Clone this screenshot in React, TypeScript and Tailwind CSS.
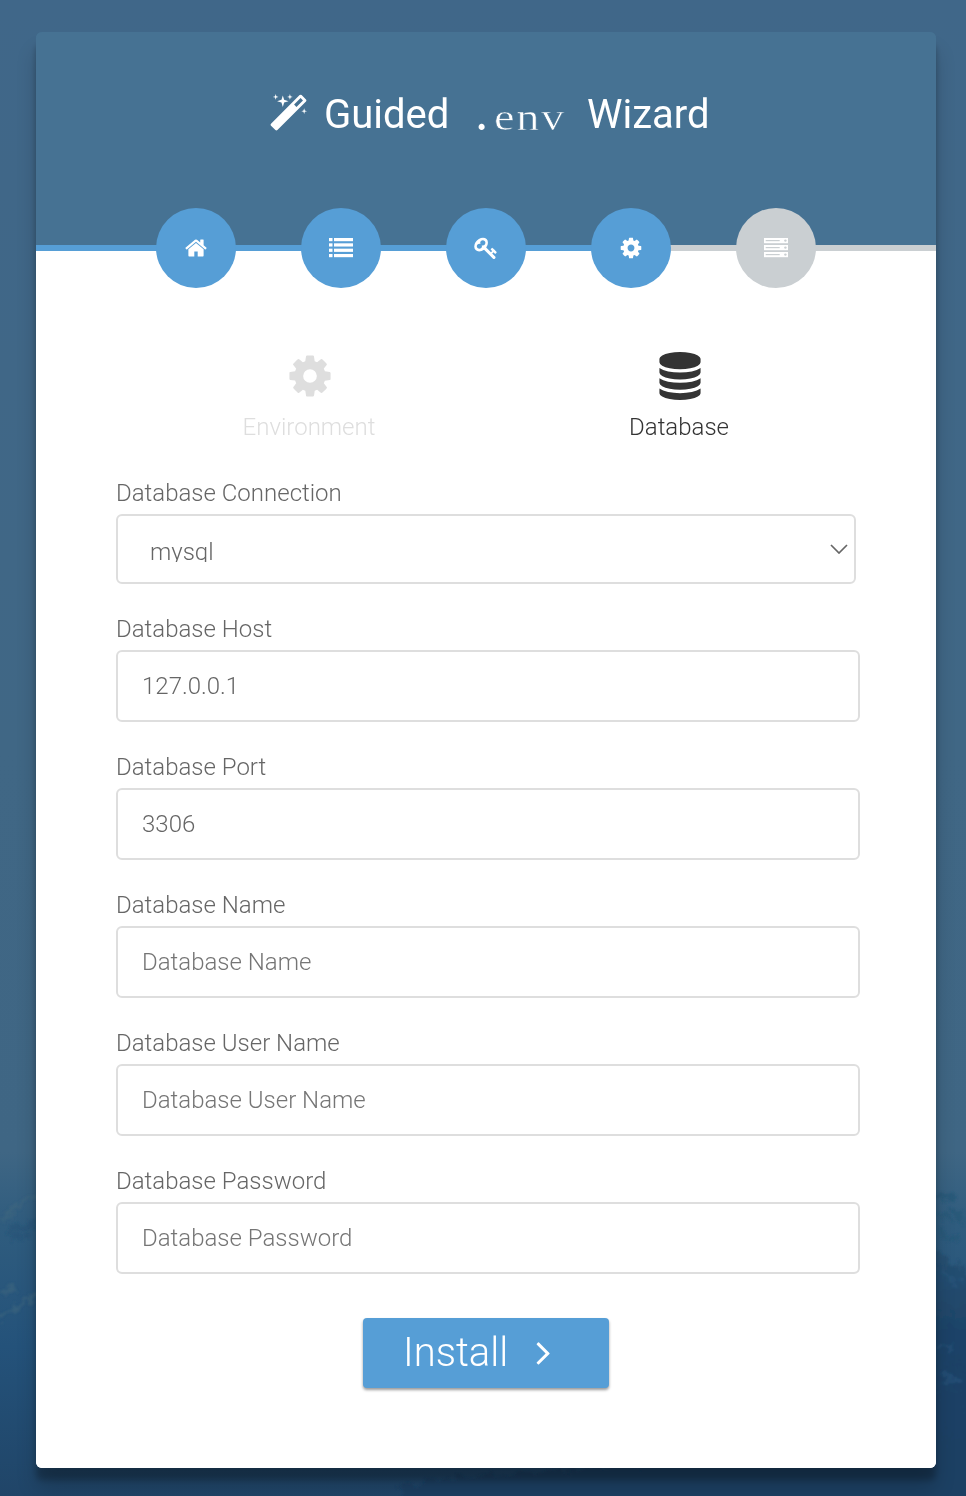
import type { ReactNode } from "react";

const paths = {
  magic:
    "M1190 581l293-293-107-107-293 293zm447-293q0 27-18 45l-1286 1286q-18 18-45 18t-45-18l-198-198q-18-18-18-45t18-45l1286-1286q18-18 45-18t45 18l198 198q18 18 18 45zm-1351-190l98 30-98 30-30 98-30-98-98-30 98-30 30-98zm350 162l196 60-196 60-60 196-60-196-196-60 196-60 60-196zm930 478l98 30-98 30-30 98-30-98-98-30 98-30 30-98zm-640-640l98 30-98 30-30 98-30-98-98-30 98-30 30-98z",
  home: "M1408 992v480q0 26-19 45t-45 19h-384v-384h-256v384h-384q-26 0-45-19t-19-45v-480q0-1 .5-3t.5-3l575-474 575 474q1 2 1 6zm223-69l-62 74q-8 9-21 11h-3q-13 0-21-7l-692-577-692 577q-12 8-24 7-13-2-21-11l-62-74q-8-10-7-23.5t11-21.5l719-599q32-26 76-26t76 26l244 204v-195q0-14 9-23t23-9h192q14 0 23 9t9 23v408l219 182q10 8 11 21.5t-7 23.5z",
  key: "M832 512q0-80-56-136t-136-56-136 56-56 136q0 42 19 83-41-19-83-19-80 0-136 56t-56 136 56 136 136 56 136-56 56-136q0-42-19-83 41 19 83 19 80 0 136-56t56-136zm851 704q0 17-49 66t-66 49q-9 0-28.5-16t-36.5-33-38.5-40-24.5-26l-96 96 220 220q28 28 28 68 0 42-39 81t-81 39q-40 0-68-28l-671-671q-176 131-365 131-163 0-265.5-102.5t-102.5-265.5q0-160 95-313t248-248 313-95q163 0 265.5 102.5t102.5 265.5q0 189-131 365l355 355 96-96q-3-3-26-24.5t-40-38.5-33-36.5-16-28.5q0-17 49-66t66-49q13 0 23 10 6 6 46 44.5t82 79.5 86.5 86 73 78 28.5 41z",
  cog: "M1024 896q0-106-75-181t-181-75-181 75-75 181 75 181 181 75 181-75 75-181zm512-109v222q0 12-8 23t-20 13l-185 28q-19 54-39 91 35 50 107 138 10 12 10 25t-9 23q-27 37-99 108t-94 71q-12 0-26-9l-138-108q-44 23-91 38-16 136-29 186-7 28-36 28h-222q-14 0-24.5-8.5t-11.5-21.5l-28-184q-49-16-90-37l-141 107q-10 9-25 9-14 0-25-11-126-114-165-168-7-10-7-23 0-12 8-23 15-21 51-66.5t54-70.5q-27-50-41-99l-183-27q-13-2-21-12.5t-8-23.5v-222q0-12 8-23t19-13l186-28q14-46 39-92-40-57-107-138-10-12-10-24 0-10 9-23 26-36 98.5-107.5t94.5-71.5q13 0 26 10l138 107q44-23 91-38 16-136 29-186 7-28 36-28h222q14 0 24.5 8.5t11.5 21.5l28 184q49 16 90 37l142-107q9-9 24-9 13 0 25 10 129 119 165 170 7 8 7 22 0 12-8 23-15 21-51 66.5t-54 70.5q26 50 41 98l183 28q13 2 21 12.5t8 23.5z",
  database:
    "M768 768q237 0 443-43t325-127v170q0 69-103 128t-280 93.5-385 34.5-385-34.5-280-93.5-103-128v-170q119 84 325 127t443 43zm0 768q237 0 443-43t325-127v170q0 69-103 128t-280 93.5-385 34.5-385-34.5-280-93.5-103-128v-170q119 84 325 127t443 43zm0-384q237 0 443-43t325-127v170q0 69-103 128t-280 93.5-385 34.5-385-34.5-280-93.5-103-128v-170q119 84 325 127t443 43zm0-1152q208 0 385 34.5t280 93.5 103 128v128q0 69-103 128t-280 93.5-385 34.5-385-34.5-280-93.5-103-128v-128q0-69 103-128t280-93.5 385-34.5z",
  angleRight:
    "M595 960q0 13-10 23l-466 466q-10 10-23 10t-23-10l-50-50q-10-10-10-23t10-23l393-393-393-393q-10-10-10-23t10-23l50-50q10-10 23-10t23 10l466 466q10 10 10 23z",
};

function Glyph({ d, box, className }: { d: string; box: string; className: string }) {
  return (
    <svg viewBox={box} className={className} fill="currentColor" aria-hidden="true">
      <path d={d} />
    </svg>
  );
}

function ListIcon() {
  return (
    <svg viewBox="0 0 24 20" className="h-5 w-6" fill="currentColor" aria-hidden="true">
      {[0, 5.33, 10.67, 16].map((y) => (
        <g key={y}>
          <rect x="0" y={y} width="3.5" height="3.2" />
          <rect x="5" y={y} width="19" height="3.2" />
        </g>
      ))}
    </svg>
  );
}

function ServerIcon() {
  return (
    <svg viewBox="0 0 24 20" className="h-5 w-6" fill="currentColor" aria-hidden="true">
      {[0, 7, 14].map((y) => (
        <g key={y}>
          <rect x="0" y={y} width="24" height="5.2" />
          <rect x="1.7" y={y + 2} width="14" height="1.2" fill="#cacfd2" />
          <circle cx="21.4" cy={y + 2.6} r="1.2" fill="#cacfd2" />
        </g>
      ))}
    </svg>
  );
}

function Step({ children, muted }: { children: ReactNode; muted?: boolean }) {
  return (
    <li
      className={
        muted
          ? "-mt-[43px] flex size-20 items-center justify-center rounded-full bg-[#cacfd2] text-white"
          : "-mt-[43px] flex size-20 items-center justify-center rounded-full bg-[#569ed6] text-white"
      }
    >
      {children}
    </li>
  );
}

function Field({ label, value }: { label: string; value?: string }) {
  return (
    <label className="block h-[138px]">
      <span className="block h-9 leading-[30px]">{label}</span>
      <input
        className="block h-[72px] w-[744px] rounded-md border-2 border-[#dedede] bg-white px-6 font-light text-[#666] outline-none placeholder:text-[#757575]"
        defaultValue={value}
        placeholder={label}
      />
    </label>
  );
}

function Backdrop() {
  return (
    <svg viewBox="0 0 966 1496" className="absolute inset-0 h-[1496px] w-[966px]" aria-hidden="true">
      <defs>
        <linearGradient id="sky" x1="0" y1="0" x2="0" y2="1">
          <stop offset="0" stopColor="#406789" />
          <stop offset="0.5" stopColor="#406785" />
          <stop offset="0.77" stopColor="#3f6684" />
          <stop offset="0.82" stopColor="#2f5c7e" />
          <stop offset="0.9" stopColor="#24527a" />
          <stop offset="1" stopColor="#204568" />
        </linearGradient>
        <linearGradient id="sea" x1="0" y1="0" x2="0" y2="1">
          <stop offset="0" stopColor="#285475" />
          <stop offset="0.35" stopColor="#1d4267" />
          <stop offset="1" stopColor="#1d4062" />
        </linearGradient>
        <filter id="spray" x="-20%" y="-20%" width="140%" height="140%">
          <feTurbulence type="fractalNoise" baseFrequency="0.09" numOctaves="3" seed="4" />
          <feDisplacementMap in="SourceGraphic" scale="24" xChannelSelector="R" yChannelSelector="G" />
          <feGaussianBlur stdDeviation="1" />
        </filter>
      </defs>
      <rect width="966" height="1496" fill="url(#sky)" />
      <g filter="url(#spray)">
        <path d="M900 1235L938 1252L966 1272L1010 1285V1530H400V1484L900 1440Z" fill="url(#sea)" />
        <path d="M0 1222L12 1210L38 1192M0 1318L24 1302L40 1290M3 1292L12 1288" stroke="#41677f" strokeWidth="5" fill="none" opacity="0.5" />
        <path d="M8 1232L36 1222M10 1240L26 1236" stroke="#265477" strokeWidth="7" fill="none" opacity="0.6" />
        <path d="M938 1195L956 1198M938 1216L950 1220M940 1232L956 1240M948 1206L964 1220" stroke="#285878" strokeWidth="5" fill="none" opacity="0.8" />
        <path d="M938 1350L950 1346M944 1376L962 1380M940 1270L960 1284" stroke="#27547b" strokeWidth="4" fill="none" opacity="0.7" />
      </g>
    </svg>
  );
}

export default function App() {
  return (
    <div className="relative h-[1496px] w-[966px] overflow-hidden font-['Roboto',sans-serif] text-2xl font-light text-[#666]">
      <Backdrop />
      <div className="relative pt-8 pl-9">
        <main className="h-[1436px] w-[900px] rounded-md bg-linear-to-b from-[#467293] from-[40px] to-white to-[40px] shadow-[0_20px_20px_rgba(0,0,0,0.19),0_12px_6px_rgba(0,0,0,0.23)]">
          <header className="h-[213px] rounded-t-md bg-[#467293] pt-[58px] pl-[234px]">
            <h1 className="flex h-12 items-center text-[40px] leading-[48px] font-normal text-white">
              <Glyph d={paths.magic} box="0 0 1664 1792" className="h-10 w-[37px]" />
              <span className="mt-0.5 ml-[17px] w-[145px]">Guided</span>
              <code className="flex w-[118px] pt-2 font-['Liberation_Serif',serif] text-[37px]">
                <span className="w-[25px] pl-2 font-bold">.</span>
                <span className="origin-left scale-x-125 tracking-[1.3px] [-webkit-text-stroke:0.5px_#467293]">env</span>
              </code>
              <span className="mt-0.5">Wizard</span>
            </h1>
          </header>
          <div className="flex h-1.5">
            <div className="w-[595px] bg-[#569ed6]" />
            <div className="flex-1 bg-[#cacfd2]" />
          </div>
          <div className="h-[1217px] rounded-b-md bg-white">
            <ol className="relative flex justify-center gap-[65px]">
              <Step>
                <Glyph d={paths.home} box="0 0 1664 1792" className="h-6 w-[22px]" />
              </Step>
              <Step>
                <ListIcon />
              </Step>
              <Step>
                <Glyph d={paths.key} box="0 0 1683 1792" className="mr-px h-6 w-[23px]" />
              </Step>
              <Step>
                <Glyph d={paths.cog} box="0 0 1536 1792" className="h-6 w-[22px]" />
              </Step>
              <Step muted>
                <ServerIcon />
              </Step>
            </ol>
            <nav className="flex pt-16 pl-[88px] text-center leading-7">
              <div className="flex w-[370px] shrink-0 flex-col items-center text-[#dedede]">
                <Glyph d={paths.cog} box="0 0 1536 1792" className="ml-px h-12 w-[42px]" />
                <span className="mt-[13px]">Environment</span>
              </div>
              <div className="flex w-[370px] shrink-0 flex-col items-center text-[#333]">
                <Glyph d={paths.database} box="0 0 1536 1792" className="ml-px h-12 w-[42px]" />
                <span className="mt-[13px]">Database</span>
              </div>
            </nav>
            <form className="px-20 pt-[37px]">
              <div className="h-[136px]">
                <div className="h-9 leading-[30px]">Database Connection</div>
                <div className="flex h-[70px] w-[740px] justify-between rounded-md border-2 border-[#dedede] bg-white">
                  <div className="mt-5 ml-8 h-[26px] overflow-hidden leading-[32px]">mysql</div>
                  <svg viewBox="0 0 18 10" className="mt-7 mr-1.5 h-2.5 w-[18px]" fill="none" stroke="#666" strokeWidth="1.7" aria-hidden="true">
                    <path d="M1 1L9 9L17 1" />
                  </svg>
                </div>
              </div>
              <Field label="Database Host" value="127.0.0.1" />
              <Field label="Database Port" value="3306" />
              <Field label="Database Name" />
              <Field label="Database User Name" />
              <Field label="Database Password" />
              <button
                type="button"
                className="mt-[14px] ml-[247px] flex h-[70px] w-[246px] items-center rounded bg-[#569ed6] pl-10 text-[40px] font-light text-white shadow-[0_2px_3px_rgba(0,0,0,0.4)]"
              >
                <span>Install</span>
                <Glyph d={paths.angleRight} box="0 0 640 1792" className="mb-0.5 ml-7 h-10 w-[15px]" />
              </button>
            </form>
          </div>
        </main>
      </div>
    </div>
  );
}
